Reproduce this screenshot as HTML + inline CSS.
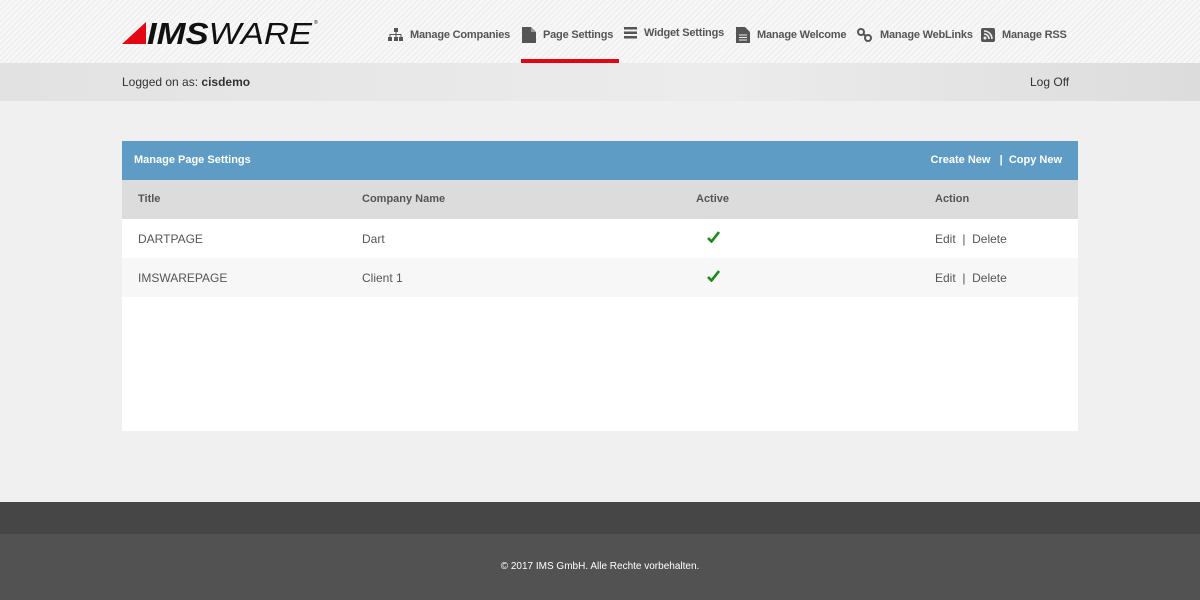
<!DOCTYPE html>
<html><head><meta charset="utf-8"><style>
*{margin:0;padding:0;box-sizing:border-box}
body{width:1200px;height:600px;overflow:hidden;background:#f0f0f0;font-family:"Liberation Sans",sans-serif;position:relative}
.hdr{position:absolute;left:0;top:0;width:1200px;height:63px;background:repeating-linear-gradient(135deg,#f7f7f7 0 3px,#ebebeb 3px 4px)}
.bar{position:absolute;left:0;top:63px;width:1200px;height:38px;background:linear-gradient(90deg,#e2e2e2,#e9e9e9 40%,#ececec 60%,#dcdcdc);font-size:12px;color:#333}
.nav{position:absolute;top:28px;font-size:11px;font-weight:bold;color:#555;display:flex;align-items:center;letter-spacing:-0.2px}
.nav svg{margin-right:7px}
.panel{position:absolute;left:122px;top:141px;width:956px;height:290px;background:#fff}
.ph{height:39px;background:#5f9cc5;color:#fff;font-size:11px;font-weight:bold;position:relative}
.row{height:39px;position:relative;font-size:12px;color:#555}
.row span{position:absolute;top:13px}
.th{background:#dcdcdc;font-weight:bold;font-size:11px;color:#555}
.foot1{position:absolute;left:0;top:502px;width:1200px;height:32px;background:#464646}
.foot2{position:absolute;left:0;top:534px;width:1200px;height:66px;background:#525252;color:#fff;font-size:10px;text-align:center;padding-top:27px}
</style></head><body>
<div class="hdr">
<svg style="position:absolute;left:122px;top:18px" width="200" height="28"><polygon points="0,26 24,4 24,26" fill="#e30613"/><text x="25" y="26" font-family="Liberation Sans" font-style="italic" font-size="31" fill="#111" textLength="165" lengthAdjust="spacingAndGlyphs"><tspan font-weight="bold">IMS</tspan><tspan>WARE</tspan></text><text x="192" y="6" font-size="5" fill="#111">®</text></svg>
<div class="nav" style="left:388px"><svg width="15" height="13"><rect x="6" y="0" width="4" height="4" fill="#555"/><rect x="0" y="9" width="4" height="4" fill="#555"/><rect x="6" y="9" width="4" height="4" fill="#555"/><rect x="11" y="9" width="4" height="4" fill="#555"/><path d="M8 4v5M2 9V6.5h11V9" stroke="#555" fill="none"/></svg>Manage Companies</div>
<div class="nav" style="left:522px;top:27px"><svg width="14" height="16"><path d="M0 0h9l5 5v11H0z" fill="#555"/><path d="M9 0v5h5" fill="#999"/></svg>Page Settings</div>
<div style="position:absolute;left:521px;top:59px;width:98px;height:4px;background:#e30613"></div>
<div class="nav" style="left:624px;top:27px"><svg width="13" height="12"><rect y="0" width="13" height="2.5" fill="#555"/><rect y="4.5" width="13" height="2.5" fill="#555"/><rect y="9" width="13" height="2.5" fill="#555"/></svg>Widget Settings</div>
<div class="nav" style="left:736px;top:27px"><svg width="14" height="16"><path d="M0 0h9l5 5v11H0z" fill="#555"/><path d="M3 8h8M3 10.5h8M3 13h8" stroke="#eee"/></svg>Manage Welcome</div>
<div class="nav" style="left:857px"><svg width="16" height="14"><circle cx="4" cy="4" r="3" stroke="#555" stroke-width="2" fill="none"/><circle cx="11" cy="10" r="3" stroke="#555" stroke-width="2" fill="none"/><path d="M6 6l3 2" stroke="#555" stroke-width="2"/></svg>Manage WebLinks</div>
<div class="nav" style="left:981px"><svg width="14" height="14"><rect width="14" height="14" rx="2" fill="#555"/><circle cx="4" cy="10" r="1.5" fill="#eee"/><path d="M3 6a5 5 0 0 1 5 5M3 3a8 8 0 0 1 8 8" stroke="#eee" stroke-width="1.6" fill="none"/></svg>Manage RSS</div>
</div>
<div class="bar"><span style="position:absolute;left:122px;top:12px">Logged on as: <b>cisdemo</b></span><span style="position:absolute;left:1030px;top:12px">Log Off</span></div>
<div class="panel">
<div class="ph"><span style="position:absolute;left:12px;top:13px">Manage Page Settings</span><span style="position:absolute;right:16px;top:13px">Create New &nbsp; | &nbsp;Copy New</span></div>
<div class="row th"><span style="left:16px">Title</span><span style="left:240px">Company Name</span><span style="left:574px">Active</span><span style="left:813px">Action</span></div>
<div class="row" style="background:#fff"><span style="left:16px">DARTPAGE</span><span style="left:240px">Dart</span><span style="left:585px;top:12px"><svg width="13" height="12"><path d="M1 7l3.5 3.5L12 1" stroke="#1a8a1a" stroke-width="2.6" fill="none"/></svg></span><span style="left:813px">Edit &nbsp;|&nbsp; Delete</span></div>
<div class="row" style="background:#f7f7f7"><span style="left:16px">IMSWAREPAGE</span><span style="left:240px">Client 1</span><span style="left:585px;top:12px"><svg width="13" height="12"><path d="M1 7l3.5 3.5L12 1" stroke="#1a8a1a" stroke-width="2.6" fill="none"/></svg></span><span style="left:813px">Edit &nbsp;|&nbsp; Delete</span></div>
</div>
<div class="foot1"></div>
<div class="foot2">© 2017 IMS GmbH. Alle Rechte vorbehalten.</div>
</body></html>
